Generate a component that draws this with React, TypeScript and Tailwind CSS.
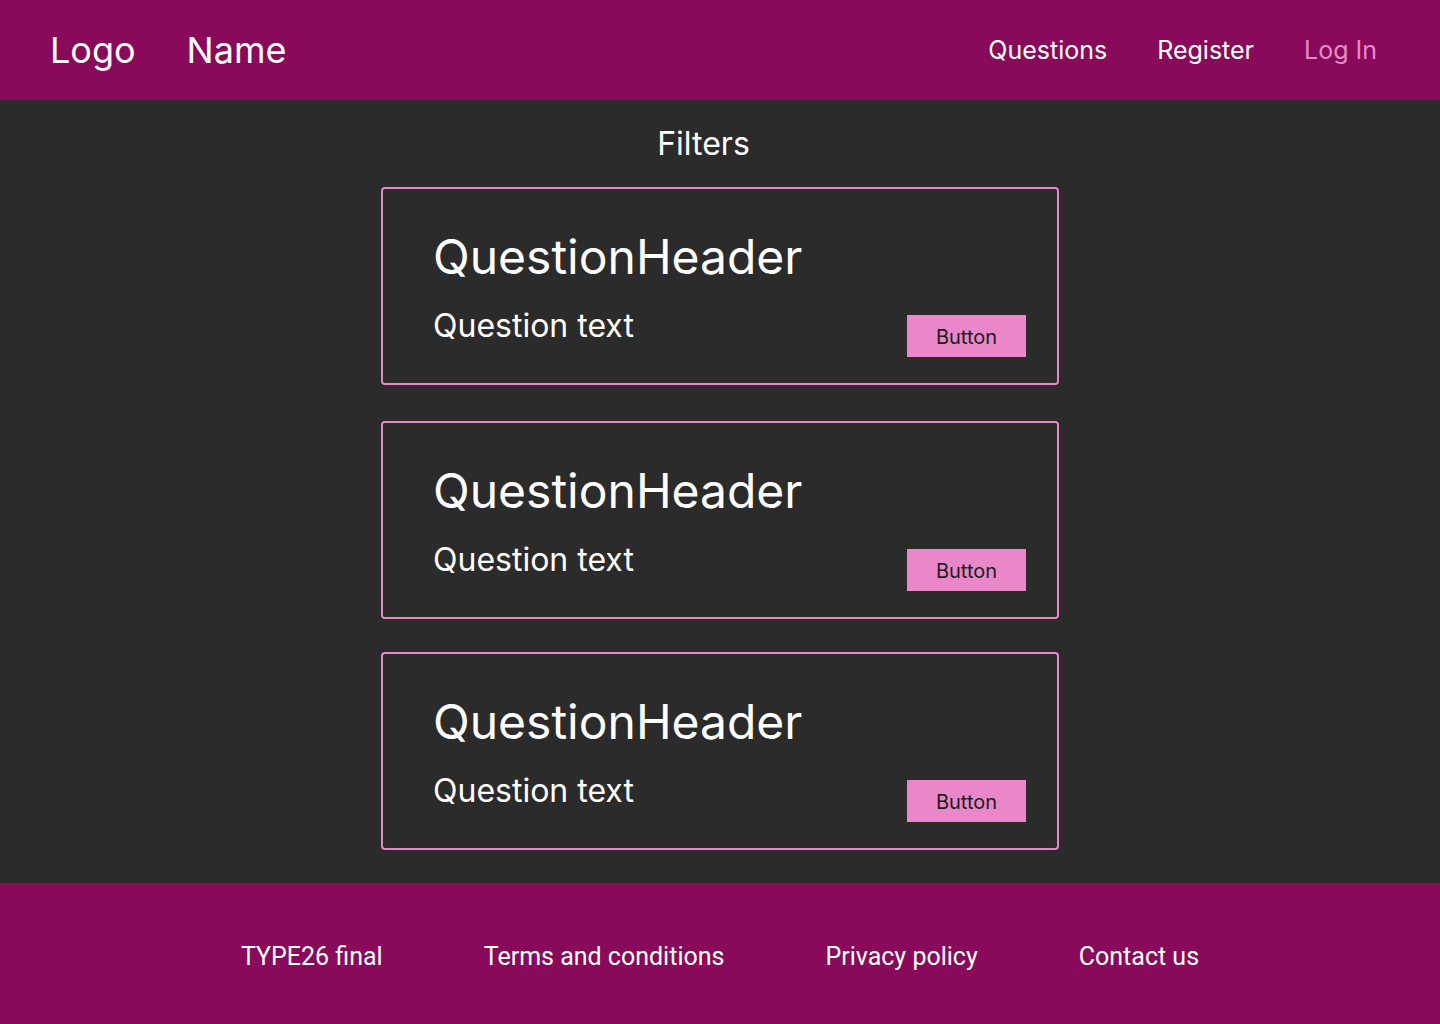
const navLinks = [
  { name: "Questions", active: true },
  { name: "Register", active: true },
  { name: "Log In", active: false },
];

const footerLinks = ["TYPE26 final", "Terms and conditions", "Privacy policy", "Contact us"];

function QuestionCard({ className }: { className?: string }) {
  return (
    <div
      className={
        "flex h-[198px] w-[678px] justify-between rounded-[4px] border-2 border-[#e987c8] " +
        (className ?? "")
      }
    >
      <div className="flex flex-col pl-[50px] pt-[39px]">
        <h2 className="text-[48px] leading-[58px] text-white">QuestionHeader</h2>
        <p className="mt-[20px] text-[32px] leading-[39px] text-white">Question text</p>
      </div>
      <button className="mb-[26px] mr-[31px] flex h-[42px] w-[119px] items-center justify-center self-end bg-[#e987c8] pt-[1px] text-[20px] text-[#1c1c1c]">
        Button
      </button>
    </div>
  );
}

export default function App() {
  return (
    <div className="flex min-h-[1024px] w-full flex-col bg-[#2b2b2b] font-['Inter',sans-serif]">
      {/* Header */}
      <header className="flex h-[100px] items-center justify-between bg-[#890a5b] pl-[50px] pr-[63px]">
        <div className="flex items-center gap-[51px] text-[36px] text-white">
          <span>Logo</span>
          <span>Name</span>
        </div>
        <nav className="flex items-center gap-[50px] pt-[2px] text-[25px]">
          {navLinks.map((item) => (
            <a
              key={item.name}
              href="#"
              className={item.active ? "text-white" : "text-[#e58ac4]"}
            >
              {item.name}
            </a>
          ))}
        </nav>
      </header>

      {/* Main */}
      <main className="flex h-[783px] flex-col items-center pt-[24px]">
        <h1 className="mr-[33px] text-[32px] leading-[39px] text-white">Filters</h1>
        <QuestionCard className="mt-[24px]" />
        <QuestionCard className="mt-[36px]" />
        <QuestionCard className="mt-[33px]" />
      </main>

      {/* Footer */}
      <footer className="flex h-[141px] items-center justify-center gap-[101px] bg-[#890a5b] pt-[6px] font-['Roboto',sans-serif] text-[25px] text-white">
        {footerLinks.map((item) => (
          <a key={item} href="#">
            {item}
          </a>
        ))}
      </footer>
    </div>
  );
}
